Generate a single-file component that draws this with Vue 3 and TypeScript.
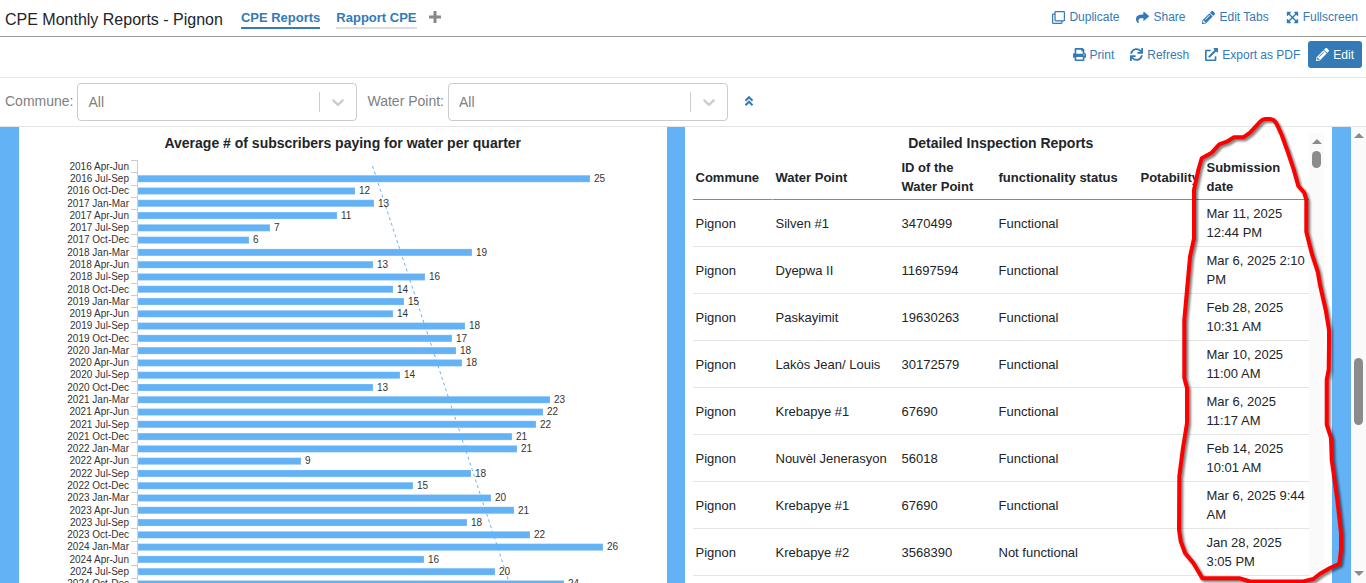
<script setup lang="ts">
import { computed } from 'vue'

interface Action {
  label: string
  icon: string
}

interface Bar {
  quarter: string
  value: number
  length: number
}

const icons: Record<string, { box: string; d: string }> = {
  clone: {
    box: '0 0 512 512',
    d: 'M464 0H144c-26.51 0-48 21.49-48 48v48H48c-26.51 0-48 21.49-48 48v320c0 26.51 21.49 48 48 48h320c26.51 0 48-21.49 48-48v-48h48c26.51 0 48-21.49 48-48V48c0-26.51-21.49-48-48-48zM362 464H54a6 6 0 0 1-6-6V150a6 6 0 0 1 6-6h42v224c0 26.51 21.49 48 48 48h224v42a6 6 0 0 1-6 6zm96-96H150a6 6 0 0 1-6-6V54a6 6 0 0 1 6-6h308a6 6 0 0 1 6 6v308a6 6 0 0 1-6 6z',
  },
  share: {
    box: '0 0 512 512',
    d: 'M503.691 189.836L327.687 37.851C312.281 24.546 288 35.347 288 56.015v80.053C127.371 137.907 0 170.1 0 322.326c0 61.441 39.581 122.309 83.333 154.132 13.653 9.931 33.111-2.533 28.077-18.631C66.066 312.814 132.917 274.316 288 272.085V360c0 20.7 24.3 31.453 39.687 18.164l176.004-152c11.071-9.562 11.086-26.753 0-36.328z',
  },
  pencil: {
    box: '0 0 512 512',
    d: 'M497.9 142.1l-46.1 46.1c-4.7 4.7-12.3 4.7-17 0l-111-111c-4.7-4.7-4.7-12.3 0-17l46.1-46.1c18.7-18.7 49.1-18.7 67.9 0l60.1 60.1c18.8 18.7 18.8 49.1 0 67.9zM284.2 99.8L21.6 362.4.4 483.9c-2.9 16.4 11.4 30.6 27.8 27.8l121.5-21.3 262.6-262.6c4.7-4.7 4.7-12.3 0-17l-111-111c-4.8-4.7-12.4-4.7-17.1 0zM124.1 339.9c-5.5-5.5-5.5-14.3 0-19.8l154-154c5.5-5.5 14.3-5.5 19.8 0s5.5 14.3 0 19.8l-154 154c-5.5 5.5-14.3 5.5-19.8 0zM88 424h48v36.3l-64.5 11.3-31.1-31.1L51.7 376H88v48z',
  },
  expand: {
    box: '-32 0 512 512',
    d: 'M448 344v112a23.94 23.94 0 0 1-24 24H312c-21.39 0-32.09-25.9-17-41l36.2-36.2L224 295.6 116.77 402.9 153 439c15.09 15.1 4.39 41-17 41H24a23.94 23.94 0 0 1-24-24V344c0-21.4 25.89-32.1 41-17l36.19 36.2L184.46 256 77.18 148.7 41 185c-15.1 15.1-41 4.4-41-17V56a23.94 23.94 0 0 1 24-24h112c21.39 0 32.09 25.9 17 41l-36.2 36.2L224 216.4l107.23-107.3L295 73c-15.09-15.1-4.39-41 17-41h112a23.94 23.94 0 0 1 24 24v112c0 21.4-25.89 32.1-41 17l-36.19-36.2L263.54 256l107.28 107.3L407 327.1c15.1-15.2 41-4.5 41 16.9z',
  },
  print: {
    box: '0 0 512 512',
    d: 'M448 192V77.25c0-8.49-3.37-16.62-9.37-22.63L393.37 9.37c-6-6-14.14-9.37-22.63-9.37H96C78.33 0 64 14.33 64 32v160c-35.35 0-64 28.65-64 64v112c0 8.84 7.16 16 16 16h48v96c0 17.67 14.33 32 32 32h320c17.67 0 32-14.33 32-32v-96h48c8.84 0 16-7.16 16-16V256c0-35.35-28.65-64-64-64zm-64 256H128v-96h256v96zm0-224H128V64h192v48c0 8.84 7.16 16 16 16h48v96zm48 72c-13.25 0-24-10.75-24-24 0-13.26 10.75-24 24-24s24 10.74 24 24c0 13.25-10.75 24-24 24z',
  },
  refresh: {
    box: '0 0 512 512',
    d: 'M440.65 12.57l4 82.77A247.16 247.16 0 0 0 255.83 8C134.73 8 33.91 94.92 12.29 209.82A12 12 0 0 0 24.09 224h49.05a12 12 0 0 0 11.67-9.26 175.91 175.91 0 0 1 317-56.94l-101.46-4.86a12 12 0 0 0-12.57 12v47.41a12 12 0 0 0 12 12H500a12 12 0 0 0 12-12V12a12 12 0 0 0-12-12h-47.37a12 12 0 0 0-11.98 12.57zM255.83 432a175.61 175.61 0 0 1-146-77.8l101.8 4.87a12 12 0 0 0 12.57-12v-47.4a12 12 0 0 0-12-12H12a12 12 0 0 0-12 12V500a12 12 0 0 0 12 12h47.35a12 12 0 0 0 12-12.6l-4.15-82.57A247.17 247.17 0 0 0 255.83 504c121.11 0 221.93-86.92 243.55-201.82a12 12 0 0 0-11.8-14.18h-49.05a12 12 0 0 0-11.67 9.26A175.86 175.86 0 0 1 255.83 432z',
  },
  export: {
    box: '0 0 512 512',
    d: 'M432,320H400a16,16,0,0,0-16,16V448H64V128H208a16,16,0,0,0,16-16V80a16,16,0,0,0-16-16H48A48,48,0,0,0,0,112V464a48,48,0,0,0,48,48H400a48,48,0,0,0,48-48V336A16,16,0,0,0,432,320ZM488,0h-128c-21.37,0-32.05,25.91-17,41l35.73,35.73L135,320.37a24,24,0,0,0,0,34L157.67,377a24,24,0,0,0,34,0L435.28,133.32,471,169c15,15,41,4.5,41-17V24A24,24,0,0,0,488,0Z',
  },
}

const pageActions: Action[] = [
  { label: 'Duplicate', icon: 'clone' },
  { label: 'Share', icon: 'share' },
  { label: 'Edit Tabs', icon: 'pencil' },
  { label: 'Fullscreen', icon: 'expand' },
]

const reportActions: Action[] = [
  { label: 'Print', icon: 'print' },
  { label: 'Refresh', icon: 'refresh' },
  { label: 'Export as PDF', icon: 'export' },
]

const filters = [
  { id: 'commune', label: 'Commune:' },
  { id: 'water-point', label: 'Water Point:' },
]

const quarters: [string, number, number][] = [
  ['2016 Apr-Jun', 0, 0],
  ['2016 Jul-Sep', 25, 452],
  ['2016 Oct-Dec', 12, 217],
  ['2017 Jan-Mar', 13, 236],
  ['2017 Apr-Jun', 11, 199],
  ['2017 Jul-Sep', 7, 132],
  ['2017 Oct-Dec', 6, 111],
  ['2018 Jan-Mar', 19, 334],
  ['2018 Apr-Jun', 13, 235],
  ['2018 Jul-Sep', 16, 287],
  ['2018 Oct-Dec', 14, 255],
  ['2019 Jan-Mar', 15, 266],
  ['2019 Apr-Jun', 14, 255],
  ['2019 Jul-Sep', 18, 327],
  ['2019 Oct-Dec', 17, 314],
  ['2020 Jan-Mar', 18, 318],
  ['2020 Apr-Jun', 18, 324],
  ['2020 Jul-Sep', 14, 262],
  ['2020 Oct-Dec', 13, 235],
  ['2021 Jan-Mar', 23, 412],
  ['2021 Apr-Jun', 22, 405],
  ['2021 Jul-Sep', 22, 398],
  ['2021 Oct-Dec', 21, 374],
  ['2022 Jan-Mar', 21, 379],
  ['2022 Apr-Jun', 9, 163],
  ['2022 Jul-Sep', 18, 333],
  ['2022 Oct-Dec', 15, 275],
  ['2023 Jan-Mar', 20, 353],
  ['2023 Apr-Jun', 21, 376],
  ['2023 Jul-Sep', 18, 329],
  ['2023 Oct-Dec', 22, 392],
  ['2024 Jan-Mar', 26, 465],
  ['2024 Apr-Jun', 16, 286],
  ['2024 Jul-Sep', 20, 357],
  ['2024 Oct-Dec', 24, 426],
]

const pitch = 12.28
const axisX = 118
const axisTop = 7

const bars = computed(() =>
  quarters
    .map(([quarter, value, length]): Bar => ({ quarter, value, length }))
    .map((bar, i) => {
      const middle = axisTop + (i + 0.5) * pitch
      return {
        ...bar,
        tick: Math.round(axisTop + i * pitch) + 0.5,
        top: middle - 3.2,
        labelY: Math.round(middle + 3.6),
        valueY: Math.round(middle + 3.6),
      }
    }),
)

const columns = ['Commune', 'Water Point', 'ID of the Water Point', 'functionality status', 'Potability', 'Submission date']

const inspections = [
  ['Pignon', 'Silven #1', '3470499', 'Functional', '', 'Mar 11, 2025 12:44 PM'],
  ['Pignon', 'Dyepwa II', '11697594', 'Functional', '', 'Mar 6, 2025 2:10 PM'],
  ['Pignon', 'Paskayimit', '19630263', 'Functional', '', 'Feb 28, 2025 10:31 AM'],
  ['Pignon', 'Lakòs Jean/ Louis', '30172579', 'Functional', '', 'Mar 10, 2025 11:00 AM'],
  ['Pignon', 'Krebapye #1', '67690', 'Functional', '', 'Mar 6, 2025 11:17 AM'],
  ['Pignon', 'Nouvèl Jenerasyon', '56018', 'Functional', '', 'Feb 14, 2025 10:01 AM'],
  ['Pignon', 'Krebapye #1', '67690', 'Functional', '', 'Mar 6, 2025 9:44 AM'],
  ['Pignon', 'Krebapye #2', '3568390', 'Not functional', '', 'Jan 28, 2025 3:05 PM'],
]
</script>

<template>
  <div class="page">
    <header class="topbar">
      <h1>CPE Monthly Reports - Pignon</h1>
      <nav class="tabs">
        <a href="#cpe" class="tab active">CPE Reports</a>
        <a href="#rapport" class="tab">Rapport CPE</a>
        <button type="button" class="add" aria-label="Add tab">
          <svg viewBox="0 0 12 12" width="12" height="12"><path d="M6 0v12M0 6h12" /></svg>
        </button>
      </nav>
      <div class="actions">
        <button v-for="a in pageActions" :key="a.label" type="button" class="link">
          <svg class="icon" :viewBox="icons[a.icon].box"><path :d="icons[a.icon].d" /></svg>{{ a.label }}
        </button>
      </div>
    </header>

    <div class="toolbar">
      <button v-for="a in reportActions" :key="a.label" type="button" class="link">
        <svg class="icon" :viewBox="icons[a.icon].box"><path :d="icons[a.icon].d" /></svg>{{ a.label }}
      </button>
      <button type="button" class="link primary">
        <svg class="icon" :viewBox="icons.pencil.box"><path :d="icons.pencil.d" /></svg>Edit
      </button>
    </div>

    <div class="filters">
      <div v-for="f in filters" :key="f.id" class="filter">
        <label :for="f.id">{{ f.label }}</label>
        <div class="picker">
          <select :id="f.id"><option>All</option></select>
          <span class="divider"></span>
          <svg class="chevron" viewBox="0 0 20 20" width="20" height="20">
            <path d="M4.516 7.548c0.436-0.446 1.043-0.481 1.576 0l3.908 3.747 3.908-3.747c0.533-0.481 1.141-0.446 1.574 0 0.436 0.445 0.408 1.197 0 1.615-0.406 0.418-4.695 4.502-4.695 4.502-0.217 0.223-0.502 0.335-0.787 0.335s-0.57-0.112-0.789-0.335c0 0-4.287-4.084-4.695-4.502s-0.436-1.17 0-1.615z" />
          </svg>
        </div>
      </div>
      <button type="button" class="collapse" aria-label="Hide filters">
        <svg viewBox="0 0 10 12" width="10" height="12"><path d="M1.500 5.700L5 2.200l3.500 3.500M1.500 10.200L5 6.700l3.500 3.500" /></svg>
      </button>
    </div>

    <main class="workspace">
      <div class="board">
        <section class="card">
          <h2>Average # of subscribers paying for water per quarter</h2>
          <svg class="chart">
            <path class="axis" d="M118.500 7V440" />
            <g v-for="b in bars" :key="b.quarter">
              <path class="axis" :d="`M112 ${b.tick}H119`" />
              <rect v-if="b.length" class="bar" :x="axisX + 1" :y="b.top" :width="b.length" height="7" />
            </g>
            <path class="trend" d="M353.500 13L491 432" />
            <g v-for="b in bars" :key="b.quarter">
              <text class="quarter" x="110" :y="b.labelY">{{ b.quarter }}</text>
              <text v-if="b.length" :x="axisX + b.length + 5" :y="b.valueY">{{ b.value }}</text>
            </g>
          </svg>
        </section>

        <section class="card split">
          <div class="report">
            <h2>Detailed Inspection Reports</h2>
            <table>
              <colgroup>
                <col class="c-commune" /><col class="c-point" /><col class="c-id" /><col class="c-status" /><col class="c-pot" /><col />
              </colgroup>
              <thead>
                <tr><th v-for="c in columns" :key="c" scope="col">{{ c }}</th></tr>
              </thead>
              <tbody>
                <tr v-for="(row, r) in inspections" :key="r">
                  <td v-for="(cell, c) in row" :key="c">{{ cell }}</td>
                </tr>
              </tbody>
            </table>
          </div>
          <div class="scrollbar inner">
            <span class="arrow up"></span>
            <span class="thumb"></span>
          </div>
        </section>
      </div>
      <div class="scrollbar outer">
        <span class="arrow up"></span>
        <div class="track"><span class="thumb"></span></div>
        <span class="arrow down"></span>
      </div>
    </main>

    <svg class="marker" viewBox="1170 110 196 473" width="196" height="473" aria-hidden="true">
      <path
        d="M1201.700 158.300L1211.700 152.700L1219.300 144.300L1226.700 141.700L1234 137.300H1243.300L1250 132.700L1257.700 124.300Q1262 119 1265 119H1270Q1274 119 1276.700 124L1281.700 135L1288.300 153.300L1293.300 168.300L1298.300 186L1304.300 192.700L1306.300 200V231.700L1311.700 253.300L1317.700 271.700L1320 285L1325.700 310L1329 330V343L1328.700 369.700L1326.700 379.700V424.700L1331 438L1331.700 459.700L1337.300 499.700L1341 533V549.700L1339.300 563.700L1330 568L1320 573.700L1313.300 579L1303.300 581.500H1250L1240 578.300H1202.300L1199.300 573L1193.300 563L1185 553L1180.700 541.300L1179 529.700L1179.300 476.300L1182.700 449.700L1187 423V388L1184.300 378V320L1187.300 286.700L1190 256.700L1194 238.300V190L1198.300 170Z"
      />
    </svg>
  </div>
</template>

<style>
body {
  margin: 0;
}
</style>

<style scoped>
.page {
  position: relative;
  display: flex;
  flex-direction: column;
  height: 100vh;
  overflow: hidden;
  background: #fff;
  color: #212529;
  font-family: "Liberation Sans", Arial, sans-serif;
}
.page * {
  box-sizing: border-box;
}
button {
  margin: 0;
  padding: 0;
  border: 0;
  background: none;
  font-family: inherit;
  cursor: pointer;
}
.topbar {
  display: flex;
  align-items: center;
  height: 37px;
  flex: none;
  padding: 0 8px 0 5px;
  border-bottom: 1px solid #999;
}
h1 {
  margin: 0;
  padding-top: 4px;
  font-size: 16px;
  font-weight: 400;
  line-height: 24px;
}
.tabs {
  display: flex;
  align-items: center;
  gap: 16px;
  margin-left: 18px;
}
.tab {
  border-bottom: 2px solid #ddd;
  color: #337ab7;
  font-size: 13px;
  font-weight: 700;
  line-height: 19px;
  text-decoration: none;
}
.tab.active {
  border-color: #337ab7;
}
.add {
  display: flex;
  margin-left: -4px;
  padding-bottom: 2px;
}
.add path {
  fill: none;
  stroke: #888;
  stroke-width: 3;
}
.actions {
  display: flex;
  gap: 17px;
  margin-left: auto;
  padding-bottom: 2px;
}
.link {
  display: flex;
  align-items: center;
  gap: 4px;
  color: #337ab7;
  font-size: 12px;
  line-height: 18px;
}
.icon {
  width: 13px;
  height: 13px;
  fill: currentColor;
}
.toolbar {
  display: flex;
  justify-content: flex-end;
  align-items: center;
  gap: 16px;
  flex: none;
  height: 41px;
  padding: 0 4px 5px 0;
  border-bottom: 1px solid #e5e5e5;
}
.primary {
  height: 27px;
  margin-left: -8px;
  padding: 0 8px;
  border-radius: 3px;
  background: #337ab7;
  color: #fff;
}
.filters {
  display: flex;
  align-items: center;
  flex: none;
  gap: 10px;
  height: 49px;
  padding: 0 5px;
  border-bottom: 1px solid #e5e5e5;
}
.filter {
  display: flex;
  align-items: center;
  gap: 4px;
  color: #808080;
  font-size: 14px;
}
.filter label {
  padding-bottom: 2px;
}
.picker {
  display: flex;
  align-items: center;
  width: 280px;
  height: 38px;
  border: 1px solid #ccc;
  border-radius: 4px;
}
select {
  flex: 1;
  height: 36px;
  padding: 0 10px;
  border: 0;
  appearance: none;
  background: none;
  color: #808080;
  font-family: inherit;
  font-size: 14px;
}
.divider {
  width: 1px;
  height: 20px;
  background: #ccc;
}
.chevron {
  margin: 0 8px;
  fill: #ccc;
}
.collapse {
  display: flex;
  margin-left: 6px;
  padding-bottom: 2px;
}
.collapse path {
  fill: none;
  stroke: #337ab7;
  stroke-width: 2;
}
.workspace {
  display: flex;
  flex: 1;
  min-height: 0;
}
.board {
  display: grid;
  grid-template-columns: minmax(0, 1fr) minmax(0, 1fr);
  grid-template-rows: minmax(0, 1fr);
  column-gap: 18px;
  flex: 1;
  min-width: 0;
  padding: 0 19px;
  background: #64b2f6;
}
.card {
  padding-top: 6px;
  overflow: hidden;
  background: #fff;
}
h2 {
  margin: 0;
  font-size: 14px;
  font-weight: 700;
  line-height: 20px;
  text-align: center;
}
.chart {
  display: block;
  width: 100%;
  height: 440px;
  font-size: 10px;
  fill: #333;
}
.axis {
  fill: none;
  stroke: #ccc;
}
.bar {
  fill: #64b2f6;
  stroke: #fff;
  stroke-opacity: 0.2;
}
.trend {
  fill: none;
  stroke: #64b2f6;
  stroke-dasharray: 3 3;
}
.quarter {
  text-anchor: end;
}
.split {
  display: flex;
  padding: 6px 8px 0;
}
.report {
  flex: 1;
  min-width: 0;
}
table {
  width: 100%;
  table-layout: fixed;
  border-collapse: separate;
  border-spacing: 0;
  font-size: 13px;
  line-height: 19px;
}
.c-commune {
  width: 80px;
}
.c-point {
  width: 126px;
}
.c-id {
  width: 97px;
}
.c-status {
  width: 142px;
}
.c-pot {
  width: 66px;
}
th,
td {
  height: 47px;
  padding: 4px 3px;
  text-align: left;
  vertical-align: middle;
}
th {
  padding: 5px 3px 3px;
  border-bottom: 1px solid #888;
}
th:first-child {
  border-right: 1px solid #fff;
}
td {
  border-bottom: 1px solid #e5e5e5;
}
th:nth-child(4) {
  white-space: nowrap;
}
th:last-child,
td:last-child {
  padding-right: 4px;
}
.scrollbar {
  display: flex;
  flex-direction: column;
  align-items: center;
  flex: none;
  width: 15px;
  background: #fafafa;
}
.arrow {
  border: 5px solid transparent;
}
.up {
  border-top: 0;
  border-bottom-color: #8b8b8b;
}
.down {
  border-bottom: 0;
  border-top-color: #8b8b8b;
}
.thumb {
  width: 9px;
  border-radius: 5px;
  background: #8b8b8b;
}
.inner {
  gap: 7px;
  padding-top: 6px;
}
.inner .thumb {
  height: 17px;
}
.outer {
  padding: 6px 0 7px;
}
.track {
  display: flex;
  flex: 1;
  flex-direction: column;
  justify-content: center;
  padding-top: 74px;
}
.outer .thumb {
  height: 67px;
}
.marker {
  position: absolute;
  top: 110px;
  right: 0;
  pointer-events: none;
  filter: drop-shadow(2px 2px 1px rgba(0, 0, 0, 0.5));
}
.marker path {
  fill: none;
  stroke: #f00;
  stroke-width: 4;
  stroke-linejoin: round;
}
</style>
